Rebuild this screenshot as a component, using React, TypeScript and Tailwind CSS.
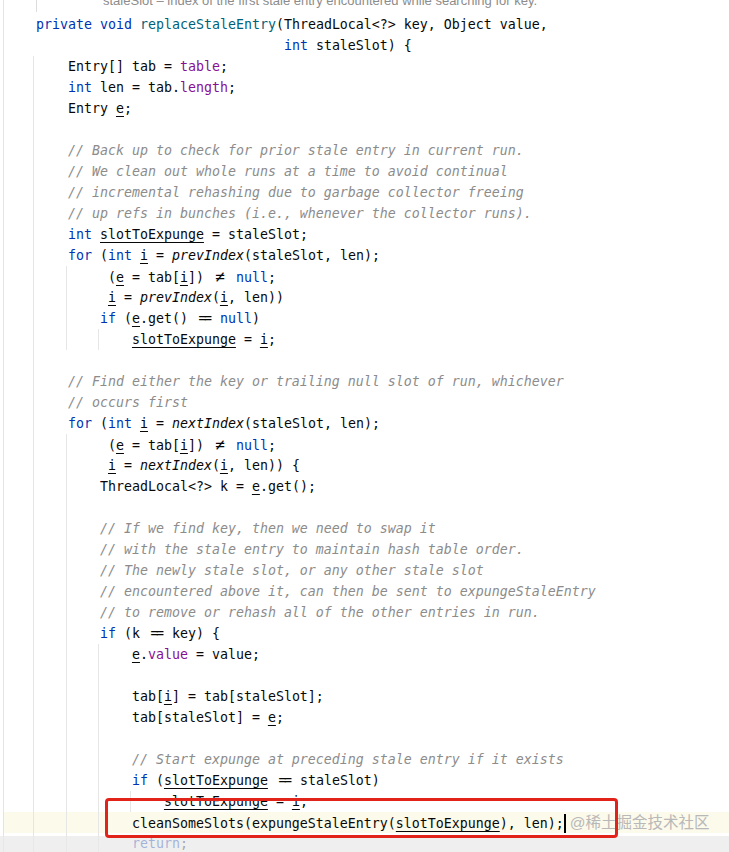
import React from "react";

const sp = (n: number) => " ".repeat(n);

function K({ children }: { children: React.ReactNode }) {
  return <span className="text-[#0033b3]">{children}</span>;
}

function F({ children }: { children: React.ReactNode }) {
  return <span className="text-[#871094]">{children}</span>;
}

function U({ children }: { children: React.ReactNode }) {
  return (
    <span className="underline decoration-1 underline-offset-[3px]">
      {children}
    </span>
  );
}

function S({ children }: { children: React.ReactNode }) {
  return <span className="italic">{children}</span>;
}

function Cm({ children }: { children: React.ReactNode }) {
  return <span className="italic text-[#8c8c8c]">{children}</span>;
}

// IntelliJ ligatures: "!=" and "=="
function Ne() {
  return (
    <span className="inline-block w-[16px] text-center text-[16px] leading-[21px]">
      ≠
    </span>
  );
}

function Eq() {
  return (
    <span className="inline-block w-[16px] text-center tracking-[-2.5px]">
      ==
    </span>
  );
}

interface ILine {
  children?: React.ReactNode;
  current?: boolean;
}

function Line({ children, current }: ILine) {
  return (
    <div
      className={`h-[21px] leading-[21px] whitespace-pre pl-[32px] ${
        current ? "bg-[#fcfaeb]" : ""
      }`}
    >
      {children}
    </div>
  );
}

const GUIDES = [
  "left-[33px] top-[56px] h-[800px]",
  "left-[66px] top-[266px] h-[84px]",
  "left-[98px] top-[329px] h-[21px]",
  "left-[66px] top-[434px] h-[420px]",
  "left-[98px] top-[644px] h-[210px]",
  "left-[130px] top-[791px] h-[21px]",
];

export default function App() {
  return (
    <div className="relative w-[729px] h-[852px] overflow-hidden bg-white text-[#080808] font-['DejaVu_Sans_Mono',monospace] text-[13.29px]">
      <div className="pl-[3px] h-full">
        <div className="h-full border-l border-[#e4e4e4]">
          {/* rendered javadoc, cut at the top */}
          <div className="h-[14px] leading-[2px] pl-[99px] font-['Liberation_Sans',sans-serif] text-[13px] text-[#8c8c8c] whitespace-pre">
            staleSlot – index of the first stale entry encountered while
            searching for key.
          </div>

          <Line>
            <K>private</K> <K>void</K>{" "}
            <span className="text-[#00627a]">replaceStaleEntry</span>
            {"(ThreadLocal<?> key, Object value,"}
          </Line>
          <Line>
            {sp(31)}
            <K>int</K> staleSlot) {"{"}
          </Line>
          <Line>
            {sp(4)}Entry[] tab = <F>table</F>;
          </Line>
          <Line>
            {sp(4)}
            <K>int</K> len = tab.<F>length</F>;
          </Line>
          <Line>
            {sp(4)}Entry <U>e</U>;
          </Line>
          <Line />
          <Line>
            {sp(4)}
            <Cm>// Back up to check for prior stale entry in current run.</Cm>
          </Line>
          <Line>
            {sp(4)}
            <Cm>// We clean out whole runs at a time to avoid continual</Cm>
          </Line>
          <Line>
            {sp(4)}
            <Cm>// incremental rehashing due to garbage collector freeing</Cm>
          </Line>
          <Line>
            {sp(4)}
            <Cm>// up refs in bunches (i.e., whenever the collector runs).</Cm>
          </Line>
          <Line>
            {sp(4)}
            <K>int</K> <U>slotToExpunge</U> = staleSlot;
          </Line>
          <Line>
            {sp(4)}
            <K>for</K> (<K>int</K> <U>i</U> = <S>prevIndex</S>(staleSlot, len);
          </Line>
          <Line>
            {sp(9)}(<U>e</U> = tab[<U>i</U>]) <Ne /> <K>null</K>;
          </Line>
          <Line>
            {sp(9)}
            <U>i</U> = <S>prevIndex</S>(<U>i</U>, len))
          </Line>
          <Line>
            {sp(8)}
            <K>if</K> (<U>e</U>.get() <Eq /> <K>null</K>)
          </Line>
          <Line>
            {sp(12)}
            <U>slotToExpunge</U> = <U>i</U>;
          </Line>
          <Line />
          <Line>
            {sp(4)}
            <Cm>
              // Find either the key or trailing null slot of run, whichever
            </Cm>
          </Line>
          <Line>
            {sp(4)}
            <Cm>// occurs first</Cm>
          </Line>
          <Line>
            {sp(4)}
            <K>for</K> (<K>int</K> <U>i</U> = <S>nextIndex</S>(staleSlot, len);
          </Line>
          <Line>
            {sp(9)}(<U>e</U> = tab[<U>i</U>]) <Ne /> <K>null</K>;
          </Line>
          <Line>
            {sp(9)}
            <U>i</U> = <S>nextIndex</S>(<U>i</U>, len)) {"{"}
          </Line>
          <Line>
            {sp(8)}
            {"ThreadLocal<?> k = "}
            <U>e</U>.get();
          </Line>
          <Line />
          <Line>
            {sp(8)}
            <Cm>// If we find key, then we need to swap it</Cm>
          </Line>
          <Line>
            {sp(8)}
            <Cm>// with the stale entry to maintain hash table order.</Cm>
          </Line>
          <Line>
            {sp(8)}
            <Cm>// The newly stale slot, or any other stale slot</Cm>
          </Line>
          <Line>
            {sp(8)}
            <Cm>
              // encountered above it, can then be sent to expungeStaleEntry
            </Cm>
          </Line>
          <Line>
            {sp(8)}
            <Cm>// to remove or rehash all of the other entries in run.</Cm>
          </Line>
          <Line>
            {sp(8)}
            <K>if</K> (k <Eq /> key) {"{"}
          </Line>
          <Line>
            {sp(12)}
            <U>e</U>.<F>value</F> = value;
          </Line>
          <Line />
          <Line>
            {sp(12)}tab[<U>i</U>] = tab[staleSlot];
          </Line>
          <Line>
            {sp(12)}tab[staleSlot] = <U>e</U>;
          </Line>
          <Line />
          <Line>
            {sp(12)}
            <Cm>// Start expunge at preceding stale entry if it exists</Cm>
          </Line>
          <Line>
            {sp(12)}
            <K>if</K> (<U>slotToExpunge</U> <Eq /> staleSlot)
          </Line>
          <Line>
            {sp(16)}
            <U>slotToExpunge</U> = <U>i</U>;
          </Line>
          <Line current>
            {sp(12)}cleanSomeSlots(expungeStaleEntry(<U>slotToExpunge</U>),
            len);
            <span className="inline-block align-middle w-[2px] h-[19px] -mt-[2px] bg-black" />
            <span className="ml-[4px] font-['Liberation_Sans','Noto_Sans_CJK_SC',sans-serif] text-[15.5px] text-[#b8b8b8]">
              @稀土掘金技术社区
            </span>
          </Line>
          <Line>
            {sp(12)}
            <K>return</K>;
          </Line>
        </div>
      </div>

      {/* indent guides */}
      <div className="absolute left-[36px] top-0 h-[12px] w-px bg-[#dcdcdc]" />
      {GUIDES.map((g, index) => (
        <div key={index} className={`absolute w-px bg-[#e6e6e6] ${g}`} />
      ))}

      {/* bottom strip */}
      <div className="absolute left-0 right-0 top-[836px] h-[16px] bg-[#e8e8e8]/70" />

      {/* annotation box */}
      <div className="absolute left-[105px] top-[798px] w-[513px] h-[40px] border-[3px] border-[#e2231a] rounded-[4px]" />
    </div>
  );
}
